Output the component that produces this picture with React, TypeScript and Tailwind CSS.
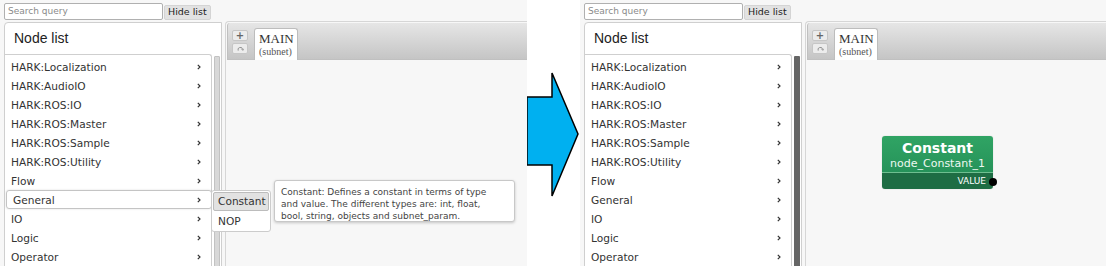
import React from 'react';

const items = [
  'HARK:Localization',
  'HARK:AudioIO',
  'HARK:ROS:IO',
  'HARK:ROS:Master',
  'HARK:ROS:Sample',
  'HARK:ROS:Utility',
  'Flow',
  'General',
  'IO',
  'Logic',
  'Operator',
];

const Chevron = () => (
  <svg width="4" height="6" viewBox="0 0 4 6">
    <path d="M0.8 0.8 L3 3 L0.8 5.2" fill="none" stroke="#333" strokeWidth="1.2" />
  </svg>
);

interface PanelProps {
  wide: boolean;
  darkScroll: boolean;
  hover: boolean;
  children?: React.ReactNode;
}

const Panel: React.FC<PanelProps> = ({ wide, darkScroll, hover, children }) => {
  return (
    <div
      className={`relative h-[266px] shrink-0 bg-[#f7f7f7] overflow-hidden font-['DejaVu_Sans',sans-serif] ${
        wide ? 'w-[527px]' : 'w-[526px]'
      }`}
    >
      {/* search row */}
      <div className="flex pl-[4px] pt-[3px] gap-[1px] h-[20px]">
        <div className="w-[159px] h-[17px] bg-white border border-[#b0b0b0] rounded-[2px] pl-[3px] flex items-center text-[9px] text-[#8a8a8a]">
          Search query
        </div>
        <div className="h-[15px] mt-[2px] px-[3px] bg-[#e2e2e2] border border-[#d4d4d4] rounded-[2px] text-[9.5px] text-[#222] flex items-center">
          Hide list
        </div>
      </div>

      <div className="flex pl-[4px] mt-[2px]">
        {/* node list */}
        <div className="w-[218px] h-[250px] bg-white border border-[#cfcfcf] rounded-tl-[4px] flex flex-col">
          <div className="h-[31px] pl-[9px] flex items-center font-['Liberation_Sans',sans-serif] text-[14px] text-[#222]">
            Node list
          </div>
          <div className="flex flex-1">
            <div className="w-[208px] border-t border-r border-[#cfcfcf] rounded-tr-[3px] pt-[2px] flex flex-col">
              {items.map((name) => {
                const active = hover && name === 'General';
                return (
                  <div
                    key={name}
                    className={`h-[19px] shrink-0 flex items-center justify-between pl-[6px] pr-[10px] text-[10.6px] text-[#333] ${
                      active
                        ? 'ml-[1px] mr-[-1px] border border-[#c4c4c4] rounded-[3px] shadow-[0_0_2px_rgba(0,0,0,0.15)] pl-[5px]'
                        : ''
                    }`}
                  >
                    <span className="pt-[2px]">{name}</span>
                    <Chevron />
                  </div>
                );
              })}
            </div>
            <div className="flex-1 pt-[2px] pl-[2px] pr-[1px]">
              <div
                className={`w-[6px] h-full rounded-t-[1px] ${
                  darkScroll ? 'bg-[#666]' : 'bg-[#d8d8d8] border border-[#c2c2c2]'
                }`}
              />
            </div>
          </div>
        </div>

        {/* canvas */}
        <div className="flex-1 ml-[3px] mt-[-1px] h-[246px] border-l border-t border-[#d6d6d6] rounded-tl-[4px] pt-[1px] pl-[1px]">
          <div className="h-[37px] bg-gradient-to-b from-[#e6e6e6] to-[#c5c5c5] border-l border-b border-[#c0c0c0] rounded-tl-[3px] flex items-end pl-[4px] gap-[6px]">
            <div className="flex flex-col gap-[2px] self-start mt-[7px]">
              <div className="w-[16px] h-[11px] bg-[#ececec] border border-[#c6c6c6] rounded-[2px] flex items-center justify-center text-[#666] text-[10px] font-bold leading-none">
                +
              </div>
              <div className="w-[16px] h-[11px] bg-[#ececec] border border-[#c6c6c6] rounded-[2px] flex items-center justify-center">
                <svg width="7" height="6" viewBox="0 0 7 6">
                  <path d="M1.2 4.6 A2.3 2.3 0 1 1 5.6 3.4" fill="none" stroke="#888" strokeWidth="0.9" />
                  <path d="M4.6 3 L5.8 4.4 L6.6 2.8" fill="none" stroke="#888" strokeWidth="0.8" />
                </svg>
              </div>
            </div>
            <div className="w-[44px] h-[32px] mb-[-1px] bg-white border border-b-0 border-[#bdbdbd] rounded-t-[3px] pl-[4px] pt-[3px] font-['Liberation_Serif',serif] text-[#333]">
              <div className="text-[13px] leading-[14px]">MAIN</div>
              <div className="text-[10px] leading-[11px] text-[#555]">(subnet)</div>
            </div>
          </div>
        </div>
      </div>

      {children}
    </div>
  );
};

export default function App() {
  return (
    <div className="w-[1106px] h-[266px] bg-white flex overflow-hidden">
      <Panel wide darkScroll={false} hover>
        {/* submenu */}
        <div className="absolute left-[211px] top-[190px] w-[60px] h-[42px] bg-white border border-[#cccccc] rounded-[3px] p-[1px] text-[10.6px] text-[#333]">
          <div className="h-[19px] bg-[#e2e2e2] border border-[#bcbcbc] rounded-[2px] flex items-center pl-[4px] pt-[1px]">
            Constant
          </div>
          <div className="h-[20px] flex items-center pl-[5px] pt-[1px]">NOP</div>
        </div>
        {/* tooltip */}
        <div className="absolute left-[274px] top-[180px] w-[241px] h-[42px] bg-white border border-[#c8c8c8] rounded-[3px] shadow-[0_1px_3px_rgba(0,0,0,0.2)] px-[6px] pt-[5px] text-[9px] leading-[12px] text-[#444]">
          Constant: Defines a constant in terms of type
          <br />
          and value. The different types are: int, float,
          <br />
          bool, string, objects and subnet_param.
        </div>
      </Panel>

      <div className="w-[53px] shrink-0 pt-[73px]">
        <svg width="53" height="124" viewBox="0 0 53 124" className="overflow-visible">
          <polygon
            points="0,24 25,24 25,0 51,61 25,123 25,92 0,92"
            fill="#00b0f0"
            stroke="#000"
            strokeWidth="1.5"
            strokeLinejoin="miter"
          />
        </svg>
      </div>

      <Panel wide={false} darkScroll hover={false}>
        <div className="absolute left-[302px] top-[136px] w-[111px] h-[53px]">
          <div className="w-full h-full rounded-[3px] overflow-hidden flex flex-col text-white shadow-[0_0_1px_rgba(0,0,0,0.3)]">
            <div className="h-[37px] bg-gradient-to-b from-[#30a464] to-[#26935a] border-b border-[#6fbf90] flex flex-col items-center pt-[3px]">
              <div className="text-[14px] font-bold leading-[18px]">Constant</div>
              <div className="text-[11px] leading-[14px] text-[#eef8f1]">node_Constant_1</div>
            </div>
            <div className="flex-1 bg-[#1e6d44] flex items-center justify-end pr-[7px] pt-[2px] text-[9px]">
              VALUE
            </div>
          </div>
          <div className="absolute right-[-4px] top-[42px] w-[8px] h-[8px] rounded-full bg-black" />
        </div>
      </Panel>
    </div>
  );
}
